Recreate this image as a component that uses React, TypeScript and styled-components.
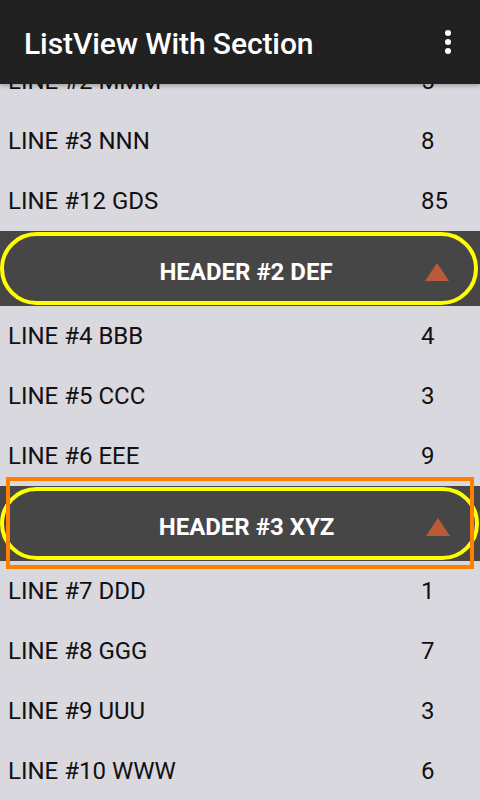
import React from "react";
import styled, { createGlobalStyle } from "styled-components";

const Global = createGlobalStyle`
  html, body { margin: 0; padding: 0; background: #d9d8de; }
  body { font-family: Roboto, "Noto Sans", sans-serif; width: 480px; height: 800px; overflow: hidden; }
`;

const Screen = styled.div`
  width: 480px;
  height: 800px;
  display: flex;
  flex-direction: column;
  background: #d9d8de;
  overflow: hidden;
`;

const Toolbar = styled.header`
  position: relative;
  z-index: 2;
  flex: 0 0 84px;
  height: 84px;
  background: #212121;
  display: flex;
  align-items: center;
  justify-content: space-between;
  padding: 0 22px 0 24px;
  box-sizing: border-box;
  box-shadow: 0 2px 4px rgba(0, 0, 0, 0.25);
`;

const Title = styled.h1`
  margin: 0;
  color: #ffffff;
  font-family: Roboto, sans-serif;
  font-weight: 500;
  font-size: 30px;
  letter-spacing: -0.1px;
  padding-top: 2px;
`;

const MenuButton = styled.div`
  display: flex;
  align-items: center;
  justify-content: center;
  width: 20px;
  height: 40px;
`;

const List = styled.div`
  margin-top: -33px;
  display: flex;
  flex-direction: column;
`;

const Row = styled.div`
  display: grid;
  grid-template-columns: 1fr 59px;
  align-items: center;
  height: 60px;
  padding-left: 8px;
  color: #111111;
  font-size: 24px;
  font-family: Roboto, sans-serif;
`;

const Header = styled.div<{ $wide?: boolean }>`
  position: relative;
  height: 75px;
  background: #464646;
  padding: 1px ${(p) => (p.$wide ? "1px" : "2px")} 1px 0;
  box-sizing: border-box;
`;

const Pill = styled.div`
  height: 100%;
  box-sizing: border-box;
  border: 4px solid #ffff00;
  border-radius: 37px;
  display: grid;
  align-items: center;
`;

const HeaderTitle = styled.span`
  grid-area: 1 / 1;
  justify-self: center;
  padding-left: 14px;
  padding-top: 6px;
  color: #ffffff;
  font-weight: 700;
  font-size: 24px;
  font-family: Roboto, sans-serif;
`;

const Arrow = styled.svg`
  grid-area: 1 / 1;
  justify-self: end;
  margin-right: 25px;
  margin-top: 6px;
  width: 24px;
  height: 18px;
`;

const Focus = styled.div`
  position: absolute;
  top: -9px;
  left: 6px;
  right: 6px;
  bottom: -8px;
  border: 4px solid #ff8000;
  pointer-events: none;
`;

type Item =
  | { kind: "row"; label: string; value: string }
  | { kind: "header"; label: string; focused?: boolean };

const items: Item[] = [
  { kind: "row", label: "LINE #2 MMM", value: "5" },
  { kind: "row", label: "LINE #3 NNN", value: "8" },
  { kind: "row", label: "LINE #12 GDS", value: "85" },
  { kind: "header", label: "HEADER #2 DEF" },
  { kind: "row", label: "LINE #4 BBB", value: "4" },
  { kind: "row", label: "LINE #5 CCC", value: "3" },
  { kind: "row", label: "LINE #6 EEE", value: "9" },
  { kind: "header", label: "HEADER #3 XYZ", focused: true },
  { kind: "row", label: "LINE #7 DDD", value: "1" },
  { kind: "row", label: "LINE #8 GGG", value: "7" },
  { kind: "row", label: "LINE #9 UUU", value: "3" },
  { kind: "row", label: "LINE #10 WWW", value: "6" },
];

export default function App() {
  return (
    <>
      <Global />
      <Screen>
        <Toolbar>
          <Title>ListView With Section</Title>
          <MenuButton>
            <svg width="8" height="26" viewBox="0 0 8 26">
              <circle cx="4" cy="4" r="3" fill="#fff" />
              <circle cx="4" cy="13" r="3" fill="#fff" />
              <circle cx="4" cy="22" r="3" fill="#fff" />
            </svg>
          </MenuButton>
        </Toolbar>
        <List>
          {items.map((it, i) =>
            it.kind === "row" ? (
              <Row key={i}>
                <span>{it.label}</span>
                <span>{it.value}</span>
              </Row>
            ) : (
              <Header key={i} $wide={it.focused}>
                <Pill>
                  <HeaderTitle>{it.label}</HeaderTitle>
                  <Arrow viewBox="0 0 24 18">
                    <polygon points="12,0 24,18 0,18" fill="#b85c38" />
                  </Arrow>
                </Pill>
                {it.focused && <Focus />}
              </Header>
            )
          )}
        </List>
      </Screen>
    </>
  );
}
